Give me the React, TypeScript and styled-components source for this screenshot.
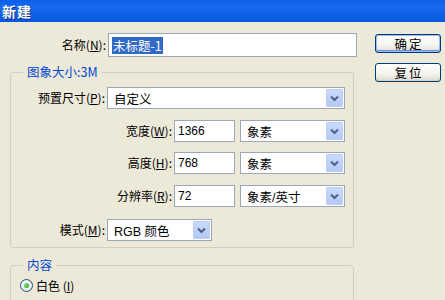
import React from "react";
import styled, { createGlobalStyle } from "styled-components";

const GlobalStyle = createGlobalStyle`
  html, body {
    margin: 0;
    padding: 0;
    background: #ece9d8;
  }
  body {
    font-family: "Noto Sans CJK SC", "Liberation Sans", sans-serif;
    font-size: 12px;
    color: #000;
  }
`;

const Window = styled.div`
  width: 445px;
  height: 300px;
  overflow: hidden;
  background: #ece9d8;
`;

const TitleBar = styled.div`
  height: 22px;
  display: flex;
  align-items: center;
  padding-left: 2px;
  background: linear-gradient(#0a5ee8 0%, #1a6af0 30%, #0c5fe4 70%, #0a58dc 100%);
  color: #fff;
  font-weight: bold;
  font-size: 14px;
  letter-spacing: 1px;
  text-shadow: 1px 1px 0 #0a2f8a;
  line-height: 1;
`;

const Body = styled.div`
  display: flex;
  padding-top: 11px;
`;

const Main = styled.div`
  width: 357px;
`;

const Side = styled.div`
  margin-left: 18px;
  padding-top: 1px;
  display: flex;
  flex-direction: column;
  gap: 10px;
`;

const Row = styled.div<{ $gap?: number }>`
  display: flex;
  align-items: center;
  margin-top: ${(p) => p.$gap ?? 0}px;
`;

const Label = styled.div<{ $w: number }>`
  width: ${(p) => p.$w}px;
  text-align: right;
  white-space: nowrap;
  margin-right: 2px;
  line-height: 1;
  u {
    text-decoration: underline;
  }
`;

const TextBox = styled.div<{ $w: number; $h?: number }>`
  width: ${(p) => p.$w}px;
  height: ${(p) => p.$h ?? 22}px;
  box-sizing: border-box;
  border: 1px solid #9ba7b7;
  background: #fff;
  display: flex;
  align-items: center;
  padding-left: 3px;
  font-family: "Liberation Sans", "Noto Sans CJK SC", sans-serif;
  font-size: 12px;
`;

const Selected = styled.span`
  background: #316ac5;
  color: #fff;
  padding: 1px 1px;
  font-family: "Noto Sans CJK SC", sans-serif;
  font-size: 12.5px;
  line-height: 15px;
`;

const SelectBox = styled.div<{ $w: number }>`
  width: ${(p) => p.$w}px;
  height: 22px;
  box-sizing: border-box;
  border: 1px solid #9ba7b7;
  background: #fff;
  display: flex;
  align-items: stretch;
  padding: 1px;
`;

const SelectValue = styled.div`
  flex: 1;
  display: flex;
  align-items: center;
  padding-left: 5px;
  font-size: 12.5px;
  font-family: "Liberation Sans", "Noto Sans CJK SC", sans-serif;
`;

const DropButton = styled.div`
  width: 17px;
  display: flex;
  align-items: center;
  justify-content: center;
  background: linear-gradient(#c9dafc, #b4c8f6);
  border: 1px solid #bccdf5;
  box-sizing: border-box;
  border-radius: 1px;
`;

const Group = styled.fieldset<{ $pb: number }>`
  margin: 0 0 0 10px;
  padding: 0 0 ${(p) => p.$pb}px 0;
  width: 344px;
  box-sizing: border-box;
  border: 1px solid #d0d0bf;
  border-radius: 3px;
`;

const Legend = styled.legend`
  margin-left: 12px;
  padding: 0 4px;
  color: #0046d5;
  font-size: 12.5px;
  line-height: 14px;
  font-family: "Noto Sans CJK SC", "Liberation Sans", sans-serif;
`;

const Button = styled.div<{ $default?: boolean }>`
  width: 66px;
  height: 19px;
  box-sizing: border-box;
  border: 1px solid #003c74;
  border-radius: 3px;
  background: linear-gradient(#ffffff, #f4f3ee 60%, #dcdad0);
  display: flex;
  align-items: center;
  justify-content: center;
  font-size: 12.5px;
  letter-spacing: 2px;
  padding-left: 2px;
  box-shadow: ${(p) =>
    p.$default ? "inset 0 0 0 1px #9dbaf2, inset 0 -1px 0 1px #6c94e4" : "inset 0 -1px 0 #d6d0c5"};
`;

const RadioRow = styled.div`
  display: flex;
  align-items: center;
  margin: 7px 0 0 9px;
  gap: 3px;
  line-height: 1;
`;

const Radio = styled.div`
  width: 13px;
  height: 13px;
  border-radius: 50%;
  box-sizing: border-box;
  border: 1px solid #1c5180;
  background: radial-gradient(circle at 40% 40%, #ffffff, #dcdcd4);
  display: flex;
  align-items: center;
  justify-content: center;
  &::after {
    content: "";
    width: 5px;
    height: 5px;
    border-radius: 50%;
    background: radial-gradient(circle at 35% 35%, #7be27b, #21a121);
  }
`;

const Chevron = () => (
  <svg width="9" height="7" viewBox="0 0 9 7">
    <path d="M1 1.5 L4.5 5 L8 1.5" fill="none" stroke="#4d6185" strokeWidth="2" />
  </svg>
);

const Select = ({ w, value }: { w: number; value: string }) => (
  <SelectBox $w={w}>
    <SelectValue>{value}</SelectValue>
    <DropButton>
      <Chevron />
    </DropButton>
  </SelectBox>
);

export default function App() {
  return (
    <Window>
      <GlobalStyle />
      <TitleBar>新建</TitleBar>
      <Body>
        <Main>
          <Row>
            <Label $w={106}>
              名称(<u>N</u>):
            </Label>
            <TextBox $w={249} $h={24}>
              <Selected>未标题-1</Selected>
            </TextBox>
          </Row>
          <div style={{ height: 8 }} />
          <Group $pb={6}>
            <Legend>图象大小:3M</Legend>
            <Row $gap={8}>
              <Label $w={94}>
                预置尺寸(<u>P</u>):
              </Label>
              <Select w={238} value="自定义" />
            </Row>
            <Row $gap={11}>
              <Label $w={161}>
                宽度(<u>W</u>):
              </Label>
              <TextBox $w={61}>1366</TextBox>
              <div style={{ width: 5 }} />
              <Select w={105} value="象素" />
            </Row>
            <Row $gap={10}>
              <Label $w={161}>
                高度(<u>H</u>):
              </Label>
              <TextBox $w={61}>768</TextBox>
              <div style={{ width: 5 }} />
              <Select w={105} value="象素" />
            </Row>
            <Row $gap={11}>
              <Label $w={161}>
                分辨率(<u>R</u>):
              </Label>
              <TextBox $w={61}>72</TextBox>
              <div style={{ width: 5 }} />
              <Select w={105} value="象素/英寸" />
            </Row>
            <Row $gap={12}>
              <Label $w={94}>
                模式(<u>M</u>):
              </Label>
              <Select w={105} value="RGB 颜色" />
            </Row>
          </Group>
          <div style={{ height: 10 }} />
          <Group $pb={20}>
            <Legend>内容</Legend>
            <RadioRow>
              <Radio />
              <span>
                白色 (<u>I</u>)
              </span>
            </RadioRow>
          </Group>
        </Main>
        <Side>
          <Button $default>确定</Button>
          <Button>复位</Button>
        </Side>
      </Body>
    </Window>
  );
}
